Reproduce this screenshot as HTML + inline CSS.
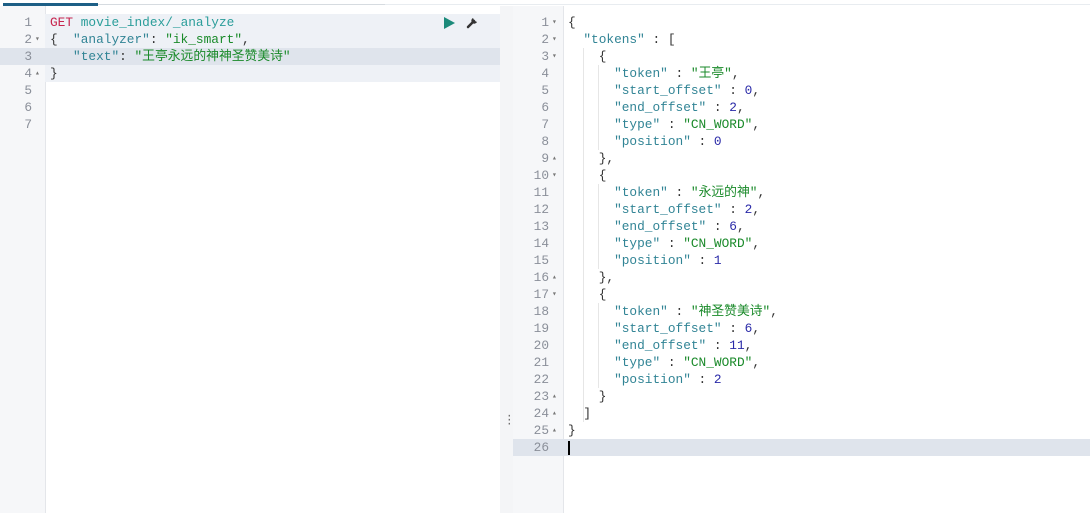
<!DOCTYPE html><html><head><meta charset="utf-8"><style>
body{margin:0;width:1090px;height:513px;overflow:hidden;background:#fff;font-family:"Liberation Mono","Noto Sans CJK SC",monospace;font-size:12.8px;position:relative}
.a{position:absolute}
.ln{position:absolute;height:17px;line-height:17px;white-space:pre}
.g{color:#8a8f99;text-align:right;width:36px;left:513px}
.lg{color:#8a8f99;text-align:right;width:32px;left:0}
.k{color:#318495}.s{color:#1a8a2a}.n{color:#2a2aa8}.p{color:#333}.r{color:#c7254e}.t{color:#2a9d9a}
.f{position:absolute;font-size:8px;color:#777;height:17px;line-height:17px}
</style></head><body>
<div class="a" style="left:3px;top:3px;width:95px;height:3px;background:#1d5f86"></div>
<div class="a" style="left:98px;top:4px;width:287px;height:1px;background:#d6dbe0"></div>
<div class="a" style="left:385px;top:4px;width:705px;height:1px;background:#e8ecf0"></div>
<div class="a" style="left:0;top:6px;width:45px;height:507px;background:#f6f7f9"></div>
<div class="a" style="left:45px;top:6px;width:1px;height:507px;background:#e4e6ea"></div>
<div class="a" style="left:45px;top:14px;width:455px;height:68px;background:#eef1f6"></div>
<div class="a" style="left:0;top:48px;width:500px;height:17px;background:#dfe4ec"></div>
<div class="a" style="left:500px;top:6px;width:13px;height:507px;background:#f4f5f7"></div>
<div class="a" style="left:506px;top:415px;color:#666;font-size:11px;line-height:4px">·<br>·<br>·</div>
<div class="a" style="left:513px;top:6px;width:50px;height:507px;background:#f6f7f9"></div>
<div class="a" style="left:563px;top:6px;width:1px;height:507px;background:#e4e6ea"></div>
<div class="a" style="left:513px;top:439px;width:577px;height:17px;background:#dfe4ec"></div>
<div class="a" style="left:568px;top:441px;width:2px;height:14px;background:#000"></div>
<div class="a" style="left:444px;top:17px;width:0;height:0;border-left:11px solid #1b8a7a;border-top:6px solid transparent;border-bottom:6px solid transparent"></div>
<svg class="a" style="left:466px;top:15px" width="14" height="14" viewBox="0 0 14 14"><path d="M2 12 L8 6" stroke="#333" stroke-width="2.5" stroke-linecap="round"/><path d="M7 3 a3 3 0 1 0 4 4 l-2 -1 -1 -1 z" fill="#333"/></svg>
<!-- left -->
<div class="ln lg" style="top:14px">1</div>
<div class="ln lg" style="top:31px">2</div><div class="f" style="left:35px;top:31px">▾</div>
<div class="ln lg" style="top:48px">3</div>
<div class="ln lg" style="top:65px">4</div><div class="f" style="left:35px;top:65px">▴</div>
<div class="ln lg" style="top:82px">5</div>
<div class="ln lg" style="top:99px">6</div>
<div class="ln lg" style="top:116px">7</div>
<div class="ln" style="left:50px;top:14px"><span class="r">GET</span> <span class="t">movie_index/_analyze</span></div>
<div class="ln p" style="left:50px;top:31px">{  <span class="k">"analyzer"</span>: <span class="s">"ik_smart"</span>,</div>
<div class="ln p" style="left:50px;top:48px">   <span class="k">"text"</span>: <span class="s">"王亭永远的神神圣赞美诗"</span></div>
<div class="ln p" style="left:50px;top:65px">}</div>
<!-- right gutter -->
<div class="ln g" style="top:14px">1</div>
<div class="ln g" style="top:31px">2</div>
<div class="ln g" style="top:48px">3</div>
<div class="ln g" style="top:65px">4</div>
<div class="ln g" style="top:82px">5</div>
<div class="ln g" style="top:99px">6</div>
<div class="ln g" style="top:116px">7</div>
<div class="ln g" style="top:133px">8</div>
<div class="ln g" style="top:150px">9</div>
<div class="ln g" style="top:167px">10</div>
<div class="ln g" style="top:184px">11</div>
<div class="ln g" style="top:201px">12</div>
<div class="ln g" style="top:218px">13</div>
<div class="ln g" style="top:235px">14</div>
<div class="ln g" style="top:252px">15</div>
<div class="ln g" style="top:269px">16</div>
<div class="ln g" style="top:286px">17</div>
<div class="ln g" style="top:303px">18</div>
<div class="ln g" style="top:320px">19</div>
<div class="ln g" style="top:337px">20</div>
<div class="ln g" style="top:354px">21</div>
<div class="ln g" style="top:371px">22</div>
<div class="ln g" style="top:388px">23</div>
<div class="ln g" style="top:405px">24</div>
<div class="ln g" style="top:422px">25</div>
<div class="ln g" style="top:439px">26</div>
<div class="f" style="left:552px;top:14px">▾</div>
<div class="f" style="left:552px;top:31px">▾</div>
<div class="f" style="left:552px;top:48px">▾</div>
<div class="f" style="left:552px;top:150px">▴</div>
<div class="f" style="left:552px;top:167px">▾</div>
<div class="f" style="left:552px;top:269px">▴</div>
<div class="f" style="left:552px;top:286px">▾</div>
<div class="f" style="left:552px;top:388px">▴</div>
<div class="f" style="left:552px;top:405px">▴</div>
<div class="f" style="left:552px;top:422px">▴</div>
<div class="a" style="left:583px;top:48px;width:1px;height:374px;background:#e6e6e6"></div>
<div class="a" style="left:598px;top:65px;width:1px;height:85px;background:#e6e6e6"></div>
<div class="a" style="left:598px;top:184px;width:1px;height:85px;background:#e6e6e6"></div>
<div class="a" style="left:598px;top:303px;width:1px;height:85px;background:#e6e6e6"></div>
<div class="ln p" style="left:568px;top:14px">{</div>
<div class="ln p" style="left:568px;top:31px">  <span class="k">"tokens"</span> : [</div>
<div class="ln p" style="left:568px;top:48px">    {</div>
<div class="ln p" style="left:568px;top:65px">      <span class="k">"token"</span> : <span class="s">"王亭"</span>,</div>
<div class="ln p" style="left:568px;top:82px">      <span class="k">"start_offset"</span> : <span class="n">0</span>,</div>
<div class="ln p" style="left:568px;top:99px">      <span class="k">"end_offset"</span> : <span class="n">2</span>,</div>
<div class="ln p" style="left:568px;top:116px">      <span class="k">"type"</span> : <span class="s">"CN_WORD"</span>,</div>
<div class="ln p" style="left:568px;top:133px">      <span class="k">"position"</span> : <span class="n">0</span></div>
<div class="ln p" style="left:568px;top:150px">    },</div>
<div class="ln p" style="left:568px;top:167px">    {</div>
<div class="ln p" style="left:568px;top:184px">      <span class="k">"token"</span> : <span class="s">"永远的神"</span>,</div>
<div class="ln p" style="left:568px;top:201px">      <span class="k">"start_offset"</span> : <span class="n">2</span>,</div>
<div class="ln p" style="left:568px;top:218px">      <span class="k">"end_offset"</span> : <span class="n">6</span>,</div>
<div class="ln p" style="left:568px;top:235px">      <span class="k">"type"</span> : <span class="s">"CN_WORD"</span>,</div>
<div class="ln p" style="left:568px;top:252px">      <span class="k">"position"</span> : <span class="n">1</span></div>
<div class="ln p" style="left:568px;top:269px">    },</div>
<div class="ln p" style="left:568px;top:286px">    {</div>
<div class="ln p" style="left:568px;top:303px">      <span class="k">"token"</span> : <span class="s">"神圣赞美诗"</span>,</div>
<div class="ln p" style="left:568px;top:320px">      <span class="k">"start_offset"</span> : <span class="n">6</span>,</div>
<div class="ln p" style="left:568px;top:337px">      <span class="k">"end_offset"</span> : <span class="n">11</span>,</div>
<div class="ln p" style="left:568px;top:354px">      <span class="k">"type"</span> : <span class="s">"CN_WORD"</span>,</div>
<div class="ln p" style="left:568px;top:371px">      <span class="k">"position"</span> : <span class="n">2</span></div>
<div class="ln p" style="left:568px;top:388px">    }</div>
<div class="ln p" style="left:568px;top:405px">  ]</div>
<div class="ln p" style="left:568px;top:422px">}</div>
</body></html>
